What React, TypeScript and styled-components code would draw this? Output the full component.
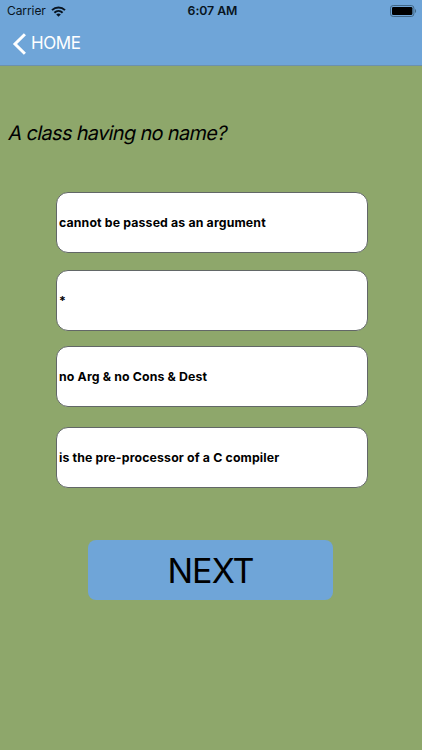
import React from "react";
import styled, { createGlobalStyle } from "styled-components";

const GlobalStyle = createGlobalStyle`
  * { box-sizing: border-box; }
  body { margin: 0; background: #8ea76b; }
`;

const Screen = styled.main`
  display: flex;
  flex-direction: column;
  width: 422px;
  height: 750px;
  overflow: hidden;
  background: #8ea76b;
  color: #000;
  font-family: Inter, "Liberation Sans", sans-serif;
`;

const Header = styled.header`
  height: 66px;
  background: #6fa5d8;
  border-bottom: 1px solid #6c91ac;
`;

const StatusBar = styled.div`
  display: grid;
  grid-template-columns: 1fr auto 1fr;
  align-items: center;
  height: 22px;
  padding: 0 5px 0 7px;
  color: #081421;
`;

const Carrier = styled.div`
  display: flex;
  align-items: center;
  gap: 5px;
  font-size: 12px;
  line-height: 22px;
  letter-spacing: -0.08px;
`;

const Clock = styled.time`
  padding-left: 1px;
  font-size: 12.3px;
  font-weight: 600;
  line-height: 22px;
  letter-spacing: -0.05px;
`;

const BatteryIcon = styled.svg`
  justify-self: end;
`;

const BackButton = styled.button`
  display: flex;
  align-items: center;
  gap: 4px;
  height: 43px;
  margin: 0;
  padding: 0 0 0 12px;
  border: 0;
  background: none;
  color: #fff;
  font: 400 17px/43px Inter, sans-serif;
  letter-spacing: -0.4px;
`;

const Question = styled.h1`
  align-self: flex-start;
  margin: 54px 0 0 9px;
  font-size: 19.8px;
  font-weight: 400;
  line-height: 26px;
  letter-spacing: -0.58px;
  white-space: nowrap;
  transform: skewX(-12deg);
`;

const Answers = styled.div`
  display: flex;
  flex-direction: column;
  margin: 46px 54px 0 56px;
`;

const Answer = styled.button<{ $gap: number }>`
  height: 61px;
  margin: 0 0 ${({ $gap }) => $gap}px;
  padding: 0 2px;
  border: 1px solid #626767;
  border-radius: 12px;
  background: #fff;
  color: #000;
  font: 700 12.3px/59px Inter, sans-serif;
  letter-spacing: 0.15px;
  text-align: left;
`;

const NextButton = styled.button`
  align-self: flex-start;
  width: 245px;
  height: 60px;
  margin: 52px 0 0 88px;
  padding: 1px 0 0;
  border: 0;
  border-radius: 8px;
  background: #6fa5d8;
  color: #000;
  font: 400 34px/59px Inter, sans-serif;
  letter-spacing: -0.9px;
`;

const answers = [
  { text: "cannot be passed as an argument", gap: 17 },
  { text: "*", gap: 15 },
  { text: "no Arg & no Cons & Dest", gap: 20 },
  { text: "is the pre-processor of a C compiler", gap: 0 },
];

export default function App() {
  return (
    <>
      <GlobalStyle />
      <Screen>
        <Header>
          <StatusBar>
            <Carrier>
              <span>Carrier</span>
              <svg width="15" height="11" viewBox="0 0 15 11" fill="none" stroke="currentColor" strokeWidth="2">
                <path d="M1 4.1C4.7.5 10.3.5 14 4.1" />
                <path d="M3.4 6.7C5.8 4.5 9.2 4.5 11.6 6.7" />
                <path d="M5.2 8.4C6.6 7.2 8.4 7.2 9.8 8.4L7.5 10.7Z" fill="currentColor" stroke="none" />
              </svg>
            </Carrier>
            <Clock>6:07 AM</Clock>
            <BatteryIcon width="27" height="12" viewBox="0 0 27 12">
              <rect x="0.5" y="0.5" width="23.4" height="11" rx="2.7" fill="none" stroke="#416786" />
              <rect x="2" y="2" width="20.4" height="8" rx="1.3" fill="#000" />
              <path d="M25 4c1.5.5 1.5 3.5 0 4z" fill="#416786" />
            </BatteryIcon>
          </StatusBar>
          <BackButton>
            <svg width="15" height="22" viewBox="0 0 15 22" fill="none" stroke="currentColor" strokeWidth="3">
              <path d="M12.9 1.2 3 11l9.9 9.8" />
            </svg>
            HOME
          </BackButton>
        </Header>
        <Question>A class having no name?</Question>
        <Answers>
          {answers.map(({ text, gap }) => (
            <Answer key={text} $gap={gap}>{text}</Answer>
          ))}
        </Answers>
        <NextButton>NEXT</NextButton>
      </Screen>
    </>
  );
}
